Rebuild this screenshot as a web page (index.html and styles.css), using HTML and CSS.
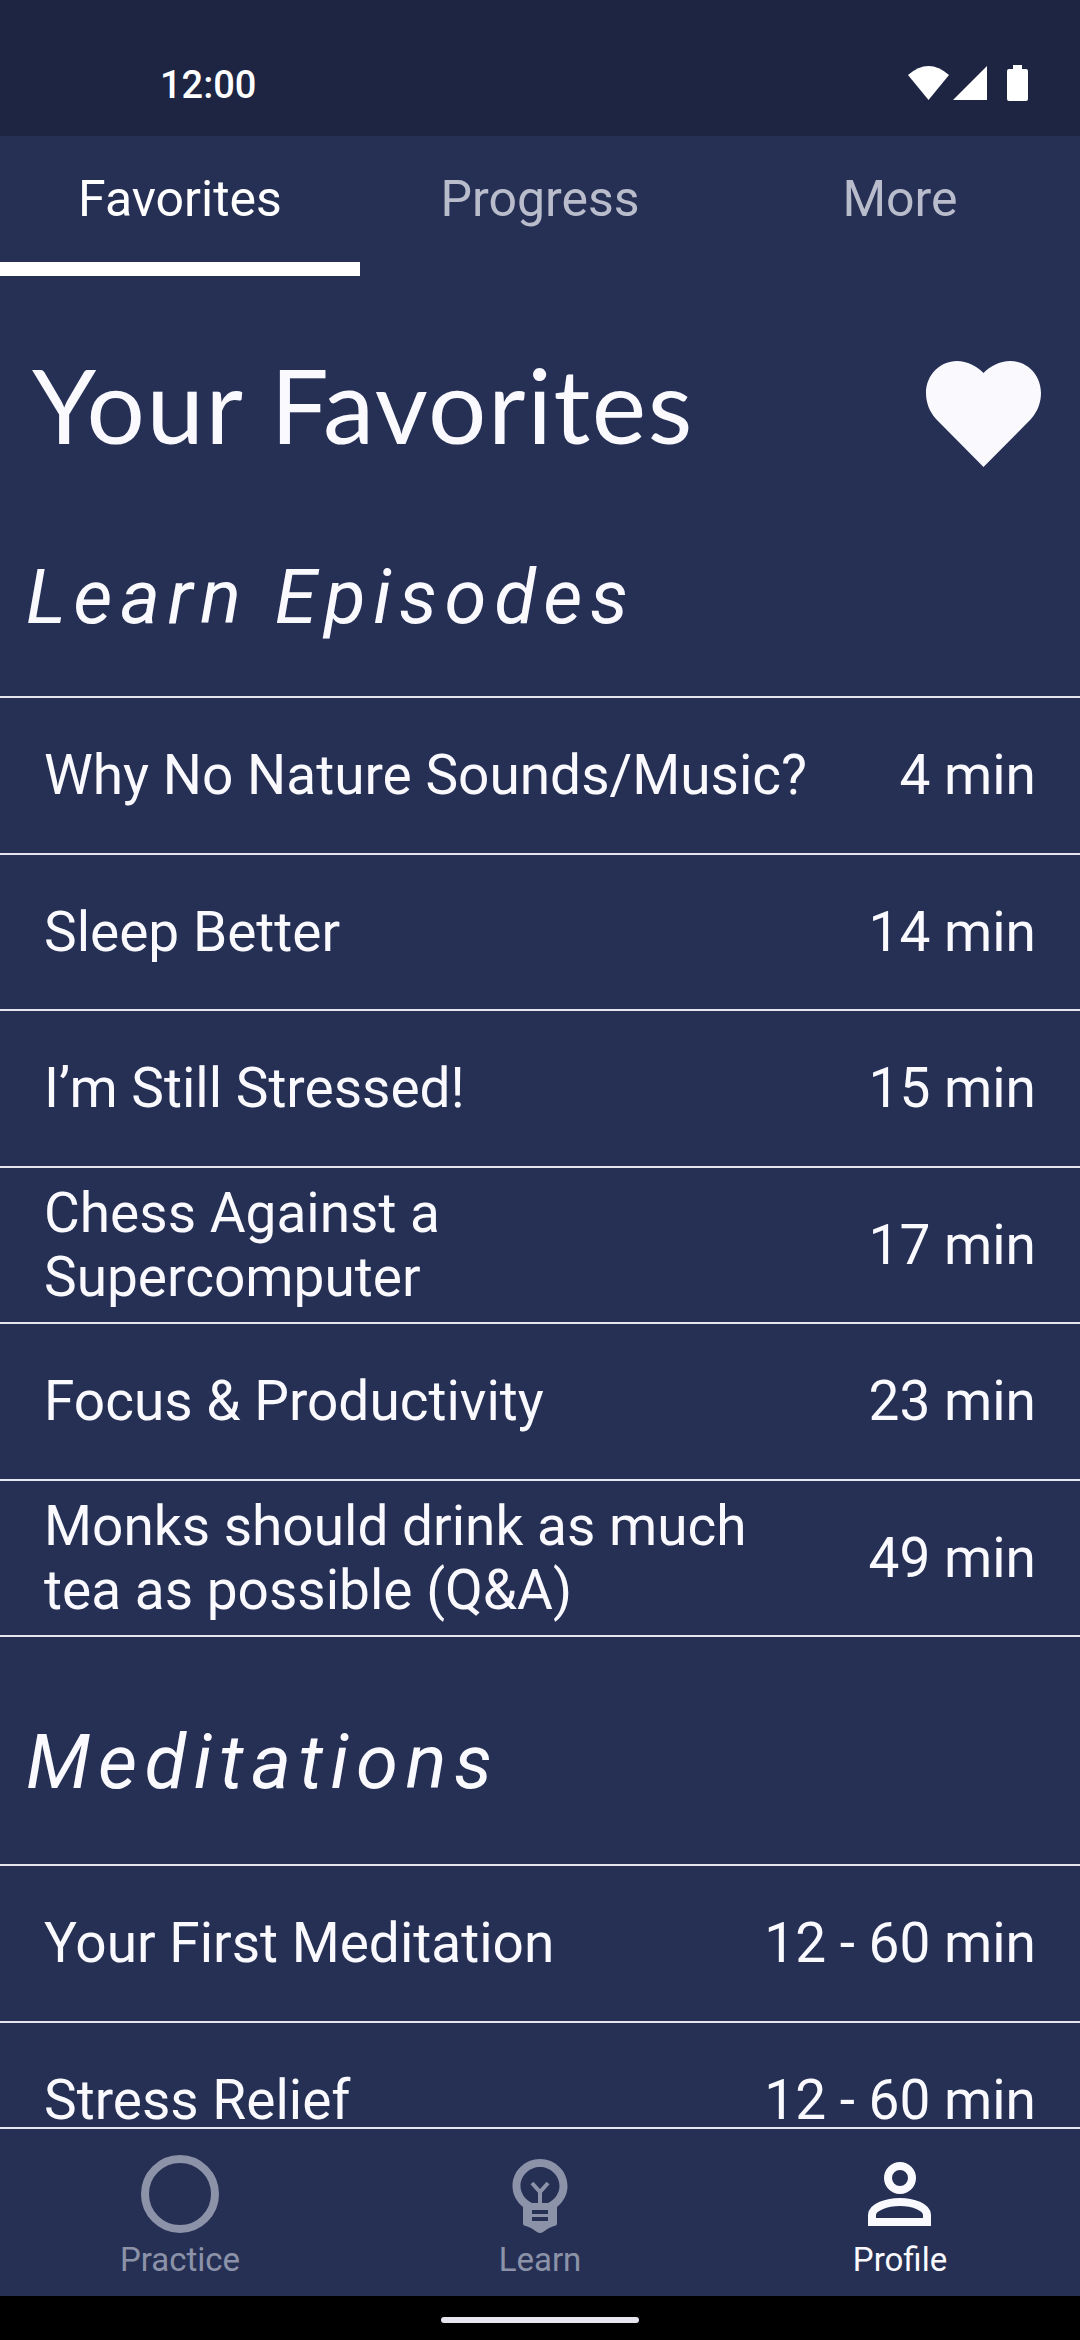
FILE: index.html
```html
<!DOCTYPE html>
<html lang="en">
<head>
    <meta charset="UTF-8">
    <meta name="viewport" content="width=device-width, initial-scale=1.0">
    <title>Your Favorites</title>
    <link rel="stylesheet" href="styles.css">
</head>
<body>
    <div class="status-bar">
        <span class="clock">12:00</span>
        <div class="status-icons">
            <svg class="wifi" width="41" height="34" viewBox="0 0 41 34"><path d="M0 9 Q20.5 -9 41 9 L20.5 34 Z" fill="#fff"/></svg>
            <svg class="signal" width="34" height="34" viewBox="0 0 34 34"><path d="M0 34 L34 0 V34 Z" fill="#fff"/></svg>
            <svg width="21" height="36" viewBox="0 0 21 36"><path d="M6 0 H15 V4 H19 Q21 4 21 6 V34 Q21 36 19 36 H2 Q0 36 0 34 V6 Q0 4 2 4 H6 Z" fill="#fff"/></svg>
        </div>
    </div>

    <div class="tabs">
        <div class="tab active">Favorites</div>
        <div class="tab">Progress</div>
        <div class="tab">More</div>
    </div>

    <div class="content">
        <div class="title-row">
            <h1>Your Favorites</h1>
            <svg class="heart" width="115" height="106" viewBox="0 0 115 106"><path d="M57.5 106 L10 58 C3 50 0 41 0 32 C0 14 14 0 31 0 C41 0 51 5 57.5 12 C64 5 74 0 84 0 C101 0 115 14 115 32 C115 41 112 50 105 58 Z" fill="#f9f9fe"/></svg>
        </div>

        <h2 class="section first">Learn Episodes</h2>
        <div class="list">
            <div class="row"><span class="name">Why No Nature Sounds/Music?</span><span class="time">4 min</span></div>
            <div class="row"><span class="name">Sleep Better</span><span class="time">14 min</span></div>
            <div class="row"><span class="name">I’m Still Stressed!</span><span class="time">15 min</span></div>
            <div class="row"><span class="name">Chess Against a Supercomputer</span><span class="time">17 min</span></div>
            <div class="row"><span class="name">Focus &amp; Productivity</span><span class="time">23 min</span></div>
            <div class="row"><span class="name">Monks should drink as much tea as possible (Q&amp;A)</span><span class="time">49 min</span></div>
        </div>

        <h2 class="section">Meditations</h2>
        <div class="list">
            <div class="row"><span class="name">Your First Meditation</span><span class="time">12 - 60 min</span></div>
            <div class="row"><span class="name">Stress Relief</span><span class="time">12 - 60 min</span></div>
        </div>
    </div>

    <div class="bottom-nav">
        <div class="nav-item">
            <svg width="80" height="80" viewBox="0 0 80 80"><circle cx="40" cy="40" r="35" fill="none" stroke="#8c93a9" stroke-width="8"/></svg>
            <span>Practice</span>
        </div>
        <div class="nav-item">
            <svg width="80" height="80" viewBox="0 0 80 80"><path d="M40 5 C25 5 12.5 17 12.5 32 C12.5 41 17 48 23 53 V69 C23 71 24 72 26 72 L31 74 L37 78 Q40 80 43 78 L49 74 L54 72 C56 72 57 71 57 69 V53 C63 48 67.5 41 67.5 32 C67.5 17 55 5 40 5 Z M40 13 C50 13 59.5 21 59.5 32 C59.5 40 54 46 48 49 H32 C26 46 20.5 40 20.5 32 C20.5 21 30 13 40 13 Z M32 56 H48 V60 H32 Z M32 63 H48 V67 H32 Z" fill="#8c93a9" fill-rule="evenodd"/><path d="M32 29 L40 38 L48 29 M40 38 V49" fill="none" stroke="#8c93a9" stroke-width="4"/></svg>
            <span>Learn</span>
        </div>
        <div class="nav-item on">
            <svg width="80" height="80" viewBox="0 0 80 80"><circle cx="40" cy="24" r="12" fill="none" stroke="#f9f9fe" stroke-width="8"/><path d="M12 68 V61 C12 53 27 48 40 48 C53 48 67 53 67 61 V68 Z" fill="none" stroke="#f9f9fe" stroke-width="8"/></svg>
            <span>Profile</span>
        </div>
    </div>

    <div class="gesture-bar"><div class="pill"></div></div>
</body>
</html>
```
FILE: styles.css
```css
* {
    box-sizing: border-box;
}

html, body {
    margin: 0;
    height: 2340px;
    overflow: hidden;
}

body {
    display: flex;
    flex-direction: column;
    font-family: Roboto, sans-serif;
    background: #263055;
    color: #f9f9fe;
}

.status-bar {
    height: 136px;
    flex-shrink: 0;
    background: #1e2543;
    display: flex;
    justify-content: space-between;
    align-items: flex-start;
    padding: 64px 52px 0 160px;
}

.clock {
    font-size: 38px;
    font-weight: 500;
    line-height: 42px;
    color: #fff;
}

.status-icons {
    display: flex;
    align-items: center;
    margin-top: 1px;
}

.wifi {
    margin-right: 4px;
}

.signal {
    margin-right: 20px;
}

.tabs {
    display: flex;
    height: 140px;
    flex-shrink: 0;
}

.tab {
    flex: 1;
    text-align: center;
    font-size: 50px;
    line-height: 58px;
    padding-top: 34px;
    color: #b8bccb;
    font-weight: 400;
}

.tab.active {
    color: #fff;
    border-bottom: 14px solid #fff;
}

.content {
    flex: 1;
    min-height: 0;
    overflow: hidden;
}

.title-row {
    display: flex;
    justify-content: space-between;
    align-items: flex-start;
    padding: 85px 39px 0 32px;
}

h1 {
    margin: 0;
    font-family: Lato, sans-serif;
    font-weight: 400;
    font-size: 103px;
    line-height: 86px;
    letter-spacing: 1.6px;
}

.section {
    margin: 0;
    font-size: 76px;
    font-weight: 400;
    font-style: italic;
    letter-spacing: 7.6px;
    line-height: 90px;
    padding: 80px 0 57px 26px;
}

.section.first {
    padding-top: 85px;
    padding-bottom: 54px;
}

.list {
    border-top: 2px solid #e6e7ee;
}

.row {
    display: flex;
    justify-content: space-between;
    align-items: center;
    height: 156.5px;
    padding: 0 44px 0 44px;
    border-bottom: 2px solid #e6e7ee;
    font-size: 55px;
    line-height: 64px;
}

.name {
    max-width: 770px;
}

.time {
    flex-shrink: 0;
}

.bottom-nav {
    display: flex;
    height: 169px;
    flex-shrink: 0;
    background: #263055;
    border-top: 2px solid #e6e7ee;
}

.nav-item {
    flex: 1;
    display: flex;
    flex-direction: column;
    align-items: center;
    padding-top: 25px;
    color: #8c93a9;
    font-size: 33px;
    line-height: 36px;
}

.nav-item span {
    margin-top: 8px;
}

.nav-item.on {
    color: #f9f9fe;
}

.gesture-bar {
    height: 44px;
    flex-shrink: 0;
    background: #000;
    display: flex;
    justify-content: center;
    padding-top: 21px;
}

.pill {
    width: 198px;
    height: 6px;
    border-radius: 3px;
    background: #e6e7ee;
}
```
